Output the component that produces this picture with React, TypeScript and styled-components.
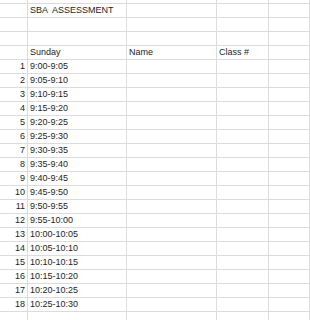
import React from "react";
import styled, { createGlobalStyle } from "styled-components";

const times = [
  "9:00-9:05",
  "9:05-9:10",
  "9:10-9:15",
  "9:15-9:20",
  "9:20-9:25",
  "9:25-9:30",
  "9:30-9:35",
  "9:35-9:40",
  "9:40-9:45",
  "9:45-9:50",
  "9:50-9:55",
  "9:55-10:00",
  "10:00-10:05",
  "10:05-10:10",
  "10:10-10:15",
  "10:15-10:20",
  "10:20-10:25",
  "10:25-10:30",
];

type RowData = string[];

const rows: RowData[] = [
  ["", "SBA  ASSESSMENT", "", "", ""],
  ["", "", "", "", ""],
  ["", "", "", "", ""],
  ["", "Sunday", "Name", "Class #", ""],
  ...times.map((t, i) => [String(i + 1), t, "", "", ""]),
  ["", "", "", "", ""],
];

const App = () => {
  return (
    <>
      <GlobalStyle />
      <Sheet>
        <Row $top>
          {[0, 1, 2, 3, 4].map((c) => (
            <Cell key={c} />
          ))}
        </Row>
        {rows.map((row, r) => (
          <Row key={r}>
            {row.map((value, c) => (
              <Cell key={c} $right={c === 0}>
                {value}
              </Cell>
            ))}
          </Row>
        ))}
      </Sheet>
    </>
  );
};

// STYLED COMPONENTS //
const GlobalStyle = createGlobalStyle({
  "html, body": {
    margin: 0,
    padding: 0,
    background: "#fff",
  },
  body: {
    width: 310,
    height: 320,
    overflow: "hidden",
  },
});

const Sheet = styled.div({
  width: 310,
  display: "flex",
  flexDirection: "column",
  fontFamily: '"Liberation Sans", Arial, sans-serif',
  fontSize: 9,
  color: "#1e1e1e",
});

const Row = styled.div<{ $top?: boolean }>((props) => ({
  display: "grid",
  gridTemplateColumns: "28px 99px 90px 52px 1fr",
  height: props.$top ? 4 : 14,
  boxSizing: "border-box",
  borderBottom: "1px solid #dcdcdc",
  flexShrink: 0,
}));

const Cell = styled.div<{ $right?: boolean }>((props) => ({
  borderRight: "1px solid #dcdcdc",
  display: "flex",
  alignItems: "flex-end",
  justifyContent: props.$right ? "flex-end" : "flex-start",
  padding: props.$right ? "0 2px 1px 0" : "0 0 1px 2px",
  whiteSpace: "pre",
  overflow: "hidden",
  lineHeight: "11px",
  ":last-child": {
    borderRight: "none",
  },
}));

export default App;
